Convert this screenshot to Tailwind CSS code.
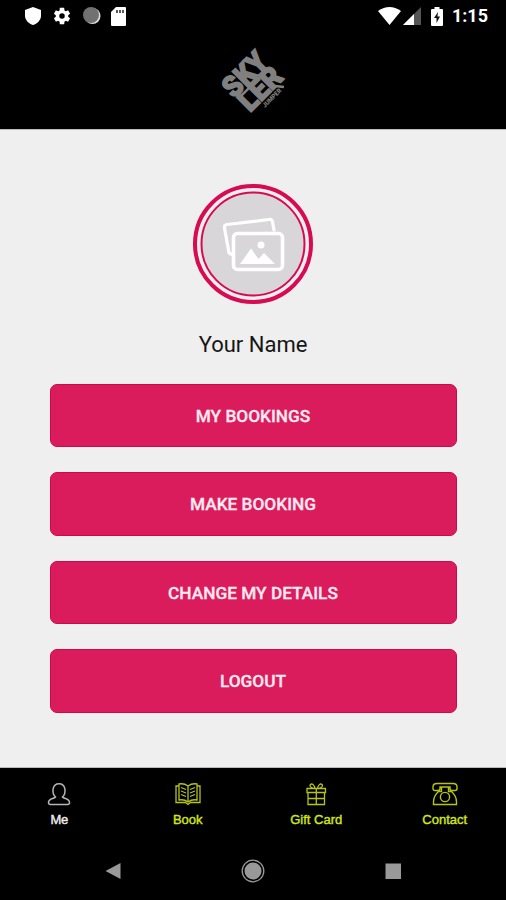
<!DOCTYPE html>
<html lang="en">
<head>
  <meta charset="UTF-8">
  <title>Skyler</title>
  <meta name="viewport" content="width=device-width, initial-scale=1.0">
  <script src="https://cdn.jsdelivr.net/npm/@tailwindcss/browser@4"></script>
</head>
<body class="flex h-screen flex-col overflow-hidden bg-black font-['Roboto',sans-serif]">

  <!-- Status bar -->
  <div class="flex h-8 shrink-0 items-center justify-between pl-6 pr-[18px] text-white">
    <div class="flex items-center gap-3">
      <svg class="h-[18px] w-[18px]" viewBox="0 0 18 18" fill="#fff"><path d="M9 0 17 3V9C17 13 13 17 9 18 5 17 1 13 1 9V3Z"/></svg>
      <svg class="-ml-[2px] h-5 w-5" viewBox="0 0 24 24" fill="#fff"><path d="M19.4 13c.1-.7.1-1.300 0-2l2.300-1.700-2.400-4.100-2.600 1.100c-.5-.4-1.100-.7-1.700-1L14.600 2H9.400L9 5.300c-.6.300-1.200.6-1.700 1L4.700 5.200 2.300 9.300 4.600 11c-.1.700-.1 1.300 0 2l-2.300 1.700 2.400 4.100 2.600-1.100c.5.400 1.100.7 1.700 1l.4 3.300h5.200l.4-3.300c.6-.3 1.200-.6 1.700-1l2.600 1.100 2.400-4.100ZM12 15.300a3.300 3.300 0 1 1 0-6.600 3.300 3.300 0 0 1 0 6.600Z"/></svg>
      <svg class="-ml-[2px] h-5 w-5" viewBox="0 0 20 20"><circle cx="10.500" cy="10" r="8" fill="#ddd"/><circle cx="9" cy="9" r="8" fill="#717171"/></svg>
      <svg class="-ml-1 h-[19px] w-[17px]" viewBox="0 0 17 19"><path d="M6 0H15Q16 0 16 1V18Q16 19 15 19H2Q1 19 1 18V5Z" fill="#fff"/><path d="M7 3v3M10 3v3M13 3v3" stroke="#222" stroke-width="1.500"/></svg>
    </div>
    <div class="flex items-center">
      <svg class="h-[18px] w-[23px]" viewBox="0 0 23 18"><path d="M0 4Q11.500-4 23 4L11.500 18Z" fill="#fff"/></svg>
      <svg class="ml-[2px] h-[18px] w-[18px]" viewBox="0 0 18 18"><path d="M18 0V18H0Z" fill="#555"/><path d="M11 7V18H0Z" fill="#fff"/></svg>
      <svg class="ml-[10px] h-[19px] w-3" viewBox="0 0 12 19"><path d="M3.500 0h5v2H11q1 0 1 1v15q0 1-1 1H1q-1 0-1-1V3q0-1 1-1h2.500Z" fill="#fff"/><path d="M7 5 3 11h2.500v5L9 9.500H6.500Z" fill="#111"/></svg>
      <span class="ml-[9px] text-[18px] leading-none font-bold">1:15</span>
    </div>
  </div>

  <!-- Header -->
  <header class="flex h-[97px] shrink-0 justify-center pt-[11px]">
    <svg class="h-[72px] w-[72px] overflow-visible" viewBox="0 0 72 72" fill="#808080" stroke="#808080" font-family="Roboto, sans-serif" font-weight="900">
      <text transform="translate(17 56) rotate(-45)" font-size="29" textLength="50" lengthAdjust="spacingAndGlyphs" stroke-width="1.600">SKY</text>
      <text transform="translate(33 70) rotate(-45)" font-size="29" textLength="49" lengthAdjust="spacingAndGlyphs" stroke-width="1.600">LER</text>
      <!-- long strokes that tie the two rows together -->
      <path d="M21 56 48 29M58 43 67 44" fill="none" stroke-width="2.500"/>
      <text transform="translate(48 65) rotate(-45)" font-size="6.500" textLength="24" lengthAdjust="spacingAndGlyphs" stroke="none">JUMPER</text>
    </svg>
  </header>

  <!-- Profile -->
  <main class="flex h-[639px] shrink-0 flex-col items-center border-y border-[#bbb] bg-[#efefef] pt-[54px]">
    <svg class="h-[120px] w-[120px] shrink-0" viewBox="0 0 120 120" fill="none">
      <circle cx="60" cy="60" r="58" fill="#f5eef1" stroke="#d60b51" stroke-width="4"/>
      <circle cx="60" cy="60" r="51.500" fill="#d8d6d9" stroke="#d60b51" stroke-width="2"/>
      <path d="M39 70.500 36 69 31.500 44Q31 41 34 40.500L76 35.500Q79 35 79.500 38L81 46" stroke="#fff" stroke-width="3.200" stroke-linejoin="round" stroke-linecap="round"/>
      <rect x="40.500" y="49.500" width="49" height="36" rx="4" fill="#d8d6d9" stroke="#fff" stroke-width="3.600"/>
      <circle cx="68" cy="61" r="3.500" fill="#fff"/>
      <path d="M47 80 58 64.500 65.500 75 71 69 82 80Z" fill="#fff"/>
    </svg>
    <h1 class="mt-[27px] text-[22px] leading-7 text-[#161616]">Your Name</h1>
    <div class="mt-[24.500px] flex w-[407px] flex-col gap-[25px] text-[17.250px] font-medium text-[#ffeaf2]">
      <button class="h-[63.500px] rounded-[7px] border border-[#d0074e] bg-[#db1c5c] pt-[3px] [-webkit-text-stroke:0.300px]">MY BOOKINGS</button>
      <button class="h-[63.500px] rounded-[7px] border border-[#d0074e] bg-[#db1c5c] pt-[3px] [-webkit-text-stroke:0.300px]">MAKE BOOKING</button>
      <button class="h-[63.500px] rounded-[7px] border border-[#d0074e] bg-[#db1c5c] pt-[3px] [-webkit-text-stroke:0.300px]">CHANGE MY DETAILS</button>
      <button class="h-[63.500px] rounded-[7px] border border-[#d0074e] bg-[#db1c5c] pt-[3px] [-webkit-text-stroke:0.300px]">LOGOUT</button>
    </div>
  </main>

  <!-- Tab bar -->
  <nav class="-ml-[5px] -mr-[3px] grid h-[74px] shrink-0 grid-cols-4 pt-[14px] font-['Liberation_Sans',sans-serif] text-[13px] leading-4 text-[#d3e51c]">
    <a class="flex flex-col items-center gap-[6px] text-[#eee]">
      <svg class="h-6 w-6" viewBox="0 0 24 24" fill="none" stroke="#b5b5b5" stroke-width="1.500"><path d="M8.500 15C4.500 11 5 1.700 12 1.700S19.500 11 15.500 15C17 17 22.500 16 22.500 20.500 22.500 22 21.500 22.500 20.500 22.500H3.500C2.500 22.500 1.500 22 1.500 20.500 1.500 16 7 17 8.500 15Z"/></svg>
      <span class="tracking-[-0.300px] [-webkit-text-stroke:0.400px]">Me</span>
    </a>
    <a class="flex flex-col items-center gap-[6px]">
      <svg class="h-6 w-[26px]" viewBox="0 0 26 24" fill="none" stroke="#b6c414" stroke-width="1.300"><path d="M13 4Q9 1 4 2V18Q9 17 13 20 17 17 22 18V2Q17 1 13 4V20M4 4H1V20.500H10.500L13 22.500 15.500 20.500H25V4H22M6 5.500 11 7.500M6 9l5 2M6 12.500l5 2M20 5.500l-5 2M20 9l-5 2M20 12.500l-5 2"/></svg>
      <span class="[-webkit-text-stroke:0.400px]">Book</span>
    </a>
    <a class="flex flex-col items-center gap-[6px]">
      <svg class="h-6 w-6" viewBox="0 0 24 24" fill="none" stroke="#b6c414" stroke-width="1.300"><path d="M3 6.500H21.500V10.500H3ZM4 10.500H20.500V22.500H4ZM12.300 6.500V22.500M4 16.500H20.500M11 6.500C7 6 5 4 6.500 2.500S10.500 3 11 6.500M13.500 6.500C17.500 6 19.500 4 18 2.500S14 3 13.500 6.500"/></svg>
      <span class="[-webkit-text-stroke:0.400px]">Gift Card</span>
    </a>
    <a class="flex flex-col items-center gap-[6px]">
      <svg class="h-6 w-[26px]" viewBox="0 0 26 24" fill="none" stroke="#b6c414" stroke-width="1.400"><path d="M5 1.500H21Q25 1.500 25 5V6.500Q25 8.500 23 8.500H20Q18 8.500 18 6.500V5H8V6.500Q8 8.500 6 8.500H3Q1 8.500 1 6.500V5Q1 1.500 5 1.500ZM9.500 5V9.500H6.500Q1.500 14 1.500 20V22.500H24.500V20Q24.500 14 19.500 9.500H16.500V5"/><circle cx="13" cy="15" r="4.600"/></svg>
      <span class="[-webkit-text-stroke:0.400px]">Contact</span>
    </a>
  </nav>

  <!-- System navigation -->
  <div class="flex h-[58px] shrink-0 items-center justify-center gap-[116px]">
    <svg class="h-6 w-6" viewBox="0 0 24 24"><path d="M4.500 12 19.500 4V20Z" fill="#999"/></svg>
    <svg class="h-6 w-6" viewBox="0 0 24 24"><circle cx="12" cy="12" r="8.500" fill="#999"/><circle cx="12" cy="12" r="10.800" fill="none" stroke="#999" stroke-width="1.300"/></svg>
    <svg class="h-6 w-6" viewBox="0 0 24 24"><path d="M4.500 4.500h15.500v15.500H4.500Z" fill="#999"/></svg>
  </div>

</body>
</html>
